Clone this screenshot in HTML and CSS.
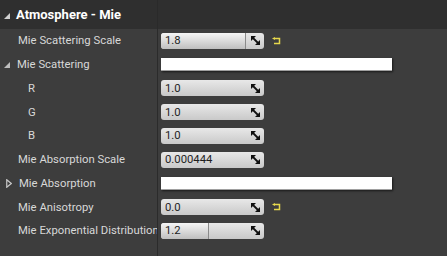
FILE: index.html
```html
<!DOCTYPE html>
<html lang="en">
<head>
    <meta charset="UTF-8">
    <title>Atmosphere - Mie</title>
    <link rel="stylesheet" href="styles.css">
</head>
<body>

<div class="panel">
    <div class="header">
        <span class="caret-open"></span>
        <span class="title">Atmosphere - Mie</span>
    </div>

    <div class="rows">
        <div class="row">
            <div class="name">Mie Scattering Scale</div>
            <div class="value">
                <div class="spin">
                    <div class="fill" style="width: 84px"></div>
                    <span class="num">1.8</span>
                    <svg class="drag" width="9" height="9" viewBox="0 0 9 9"><polygon points="0,0 5,0 0,5"/><polygon points="9,9 4,9 9,4"/><line x1="1" y1="1" x2="8" y2="8"/></svg>
                </div>
                <svg class="reset" width="9" height="8" viewBox="0 0 9 8"><path d="M3 1.5 H7.5 V6.5 H2"/><polygon points="0,1.5 3,0 3,3"/></svg>
            </div>
        </div>

        <div class="row">
            <div class="name with-caret"><span class="caret-open small"></span>Mie Scattering</div>
            <div class="value"><div class="swatch"></div></div>
        </div>

        <div class="row">
            <div class="name sub">R</div>
            <div class="value">
                <div class="spin">
                    <span class="num">1.0</span>
                    <svg class="drag" width="9" height="9" viewBox="0 0 9 9"><polygon points="0,0 5,0 0,5"/><polygon points="9,9 4,9 9,4"/><line x1="1" y1="1" x2="8" y2="8"/></svg>
                </div>
            </div>
        </div>

        <div class="row">
            <div class="name sub">G</div>
            <div class="value">
                <div class="spin">
                    <span class="num">1.0</span>
                    <svg class="drag" width="9" height="9" viewBox="0 0 9 9"><polygon points="0,0 5,0 0,5"/><polygon points="9,9 4,9 9,4"/><line x1="1" y1="1" x2="8" y2="8"/></svg>
                </div>
            </div>
        </div>

        <div class="row">
            <div class="name sub">B</div>
            <div class="value">
                <div class="spin">
                    <span class="num">1.0</span>
                    <svg class="drag" width="9" height="9" viewBox="0 0 9 9"><polygon points="0,0 5,0 0,5"/><polygon points="9,9 4,9 9,4"/><line x1="1" y1="1" x2="8" y2="8"/></svg>
                </div>
            </div>
        </div>

        <div class="row">
            <div class="name">Mie Absorption Scale</div>
            <div class="value">
                <div class="spin">
                    <span class="num">0.000444</span>
                    <svg class="drag" width="9" height="9" viewBox="0 0 9 9"><polygon points="0,0 5,0 0,5"/><polygon points="9,9 4,9 9,4"/><line x1="1" y1="1" x2="8" y2="8"/></svg>
                </div>
            </div>
        </div>

        <div class="row">
            <div class="name with-caret"><svg class="caret-closed" width="6" height="9" viewBox="0 0 6 9"><polygon points="0.75,0.75 5.25,4.5 0.75,8.25"/></svg>Mie Absorption</div>
            <div class="value"><div class="swatch"></div></div>
        </div>

        <div class="row">
            <div class="name">Mie Anisotropy</div>
            <div class="value">
                <div class="spin">
                    <span class="num">0.0</span>
                    <svg class="drag" width="9" height="9" viewBox="0 0 9 9"><polygon points="0,0 5,0 0,5"/><polygon points="9,9 4,9 9,4"/><line x1="1" y1="1" x2="8" y2="8"/></svg>
                </div>
                <svg class="reset" width="9" height="8" viewBox="0 0 9 8"><path d="M3 1.5 H7.5 V6.5 H2"/><polygon points="0,1.5 3,0 3,3"/></svg>
            </div>
        </div>

        <div class="row">
            <div class="name">Mie Exponential Distribution</div>
            <div class="value">
                <div class="spin">
                    <div class="fill" style="width: 47px"></div>
                    <span class="num">1.2</span>
                    <svg class="drag" width="9" height="9" viewBox="0 0 9 9"><polygon points="0,0 5,0 0,5"/><polygon points="9,9 4,9 9,4"/><line x1="1" y1="1" x2="8" y2="8"/></svg>
                </div>
            </div>
        </div>
    </div>
</div>

</body>
</html>
```

FILE: styles.css
```css
body {
    margin: 0;
    background-color: #3d3d3d;
    font-family: Roboto, "Open Sans", sans-serif;
}
.panel {
    width: 447px;
    height: 256px;
    display: flex;
    flex-direction: column;
    overflow: hidden;
}
.header {
    height: 29px;
    flex-shrink: 0;
    background: linear-gradient(to right, transparent 157px, #2a2a2a 157px, #2a2a2a 158px, transparent 158px), #2f2f2f;
    display: flex;
    align-items: center;
    padding-left: 4px;
}
.title {
    color: #fff;
    font-size: 13px;
    font-weight: bold;
    margin-left: 6px;
}
.caret-open {
    width: 0;
    height: 0;
    border-bottom: 6px solid #cfcfcf;
    border-left: 6px solid transparent;
    margin-top: 2px;
}
.caret-open.small {
    border-bottom-color: #bdbdbd;
    margin: 0 7px 0 0;
}
.caret-closed {
    margin: 0 7px 0 2px;
}
.caret-closed polygon {
    fill: none;
    stroke: #c8c8c8;
    stroke-width: 1.2;
}
.rows {
    flex: 1;
    background: linear-gradient(to right, transparent 157px, #2b2b2b 157px, #2b2b2b 158px, transparent 158px);
}
.row {
    display: grid;
    grid-template-columns: 157px 1fr;
    height: 23.75px;
}
.name {
    display: flex;
    align-items: center;
    padding-left: 18px;
    color: #d8d8d8;
    font-size: 11.3px;
    white-space: nowrap;
    overflow: hidden;
}
.name.with-caret {
    padding-left: 4px;
}
.name.sub {
    padding-left: 28px;
}
.value {
    display: flex;
    align-items: center;
    padding-left: 4px;
    gap: 8px;
}
.spin {
    position: relative;
    width: 103px;
    height: 16px;
    border-radius: 3px;
    background: linear-gradient(#e8e8e8, #c9c9c9);
    display: flex;
    align-items: center;
    overflow: hidden;
}
.fill {
    position: absolute;
    left: 0;
    top: 0;
    bottom: 0;
    background: linear-gradient(#f6f6f6, #bfbfbf);
    border-right: 1px solid #8a8a8a;
}
.num {
    position: relative;
    padding-left: 4px;
    flex: 1;
    color: #1e1e1e;
    font-size: 11.3px;
}
.drag {
    position: relative;
    margin-right: 4px;
}
.drag polygon {
    fill: #111;
}
.drag line {
    stroke: #111;
    stroke-width: 1.8;
}
.reset path {
    fill: none;
    stroke: #e6d84c;
    stroke-width: 1.5;
}
.reset polygon {
    fill: #e6d84c;
}
.swatch {
    width: 231px;
    height: 12px;
    background-color: #fff;
    border-bottom: 1px solid #a0a0a0;
    box-shadow: 1px 1px 2px rgba(0, 0, 0, 0.6);
}
```
